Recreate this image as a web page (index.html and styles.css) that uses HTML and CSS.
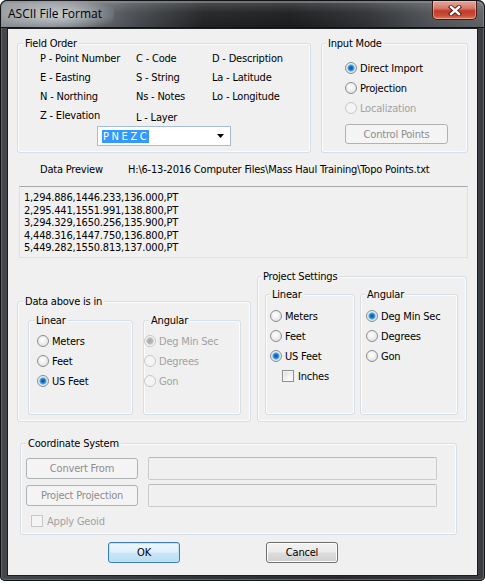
FILE: index.html
```html
<!DOCTYPE html>
<html>
<head>
<meta charset="utf-8">
<title>ASCII File Format</title>
<link rel="stylesheet" href="styles.css">
</head>
<body>
<div class="window">
  <div class="titlebar">
    <span class="title">ASCII File Format</span>
    <div class="close">
      <svg width="14" height="11" viewBox="0 0 14 11"><path d="M3 2 L11 9 M11 2 L3 9" stroke="#4a1610" stroke-width="4.2" stroke-linecap="square"/><path d="M3 2 L11 9 M11 2 L3 9" stroke="#fff" stroke-width="2.4" stroke-linecap="square"/></svg>
    </div>
  </div>
  <div class="client">
    <div class="row-top">
      <div class="group g-field">
        <div class="legend">Field Order</div>
        <div class="codes">
          <span>P - Point Number</span><span>C - Code</span><span>D - Description</span>
          <span>E - Easting</span><span>S - String</span><span>La - Latitude</span>
          <span>N - Northing</span><span>Ns - Notes</span><span>Lo - Longitude</span>
          <span>Z - Elevation</span><span class="low">L - Layer</span><span></span>
        </div>
        <div class="combo">
          <span class="sel">PNEZC</span>
          <svg class="arrow" width="7" height="4" viewBox="0 0 7 4"><path d="M0 0 H7 L3.5 4 Z" fill="#000"/></svg>
        </div>
      </div>
      <div class="group g-input">
        <div class="legend">Input Mode</div>
        <div class="opts im-opts">
          <div class="opt"><span class="radio on"></span><span>Direct Import</span></div>
          <div class="opt"><span class="radio"></span><span>Projection</span></div>
          <div class="opt dis"><span class="radio"></span><span>Localization</span></div>
        </div>
        <button class="btn disabled cp-btn">Control Points</button>
      </div>
    </div>

    <div class="preview-head">
      <span class="ph-label">Data Preview</span>
      <span class="ph-path">H:\6-13-2016 Computer Files\Mass Haul Training\Topo Points.txt</span>
    </div>
    <div class="preview">
      <div>1,294.886,1446.233,136.000,PT</div>
      <div>2,295.441,1551.991,138.800,PT</div>
      <div>3,294.329,1650.256,135.900,PT</div>
      <div>4,448.316,1447.750,136.800,PT</div>
      <div>5,449.282,1550.813,137.000,PT</div>
    </div>

    <div class="row-units">
      <div class="group g-above">
        <div class="legend">Data above is in</div>
        <div class="subs">
          <div class="group sub a-lin">
            <div class="legend">Linear</div>
            <div class="opts">
              <div class="opt"><span class="radio"></span><span>Meters</span></div>
              <div class="opt"><span class="radio"></span><span>Feet</span></div>
              <div class="opt"><span class="radio on"></span><span>US Feet</span></div>
            </div>
          </div>
          <div class="group sub a-ang">
            <div class="legend">Angular</div>
            <div class="opts">
              <div class="opt dis"><span class="radio on"></span><span>Deg Min Sec</span></div>
              <div class="opt dis"><span class="radio"></span><span>Degrees</span></div>
              <div class="opt dis"><span class="radio"></span><span>Gon</span></div>
            </div>
          </div>
        </div>
      </div>
      <div class="group g-proj">
        <div class="legend">Project Settings</div>
        <div class="subs">
          <div class="group sub p-lin">
            <div class="legend">Linear</div>
            <div class="opts">
              <div class="opt"><span class="radio"></span><span>Meters</span></div>
              <div class="opt"><span class="radio"></span><span>Feet</span></div>
              <div class="opt"><span class="radio on"></span><span>US Feet</span></div>
              <div class="opt chk-opt"><span class="check"></span><span>Inches</span></div>
            </div>
          </div>
          <div class="group sub p-ang">
            <div class="legend">Angular</div>
            <div class="opts">
              <div class="opt"><span class="radio on"></span><span>Deg Min Sec</span></div>
              <div class="opt"><span class="radio"></span><span>Degrees</span></div>
              <div class="opt"><span class="radio"></span><span>Gon</span></div>
            </div>
          </div>
        </div>
      </div>
    </div>

    <div class="group g-coord">
      <div class="legend">Coordinate System</div>
      <div class="cs-row">
        <button class="btn disabled cs-btn">Convert From</button>
        <div class="field"></div>
      </div>
      <div class="cs-row">
        <button class="btn disabled cs-btn">Project Projection</button>
        <div class="field"></div>
      </div>
      <div class="opt dis geoid"><span class="check"></span><span>Apply Geoid</span></div>
    </div>

    <div class="actions">
      <button class="btn default">OK</button>
      <button class="btn">Cancel</button>
    </div>
  </div>
</div>
</body>
</html>
```

FILE: styles.css
```css
* { box-sizing: border-box; }
html, body { margin: 0; padding: 0; background: #fff; }
body {
  width: 485px; height: 584px; overflow: hidden;
  font-family: "DejaVu Sans Condensed", "Liberation Sans", sans-serif;
  font-size: 11px; color: #000;
  letter-spacing: -0.2px;
}
.window {
  width: 485px; height: 581px;
  border-radius: 7px 7px 5px 5px;
  background: linear-gradient(90deg, #45494d 0%, #34373a 40%, #2a2c2f 70%, #3a3d41 100%);
  box-shadow: inset 0 0 0 1px #121314, inset 0 0 0 2px #62666a;
  overflow: hidden;
}
.titlebar {
  height: 28px;
  display: flex; justify-content: space-between; align-items: flex-start;
  padding: 0 8px 0 2px;
  border-radius: 7px 7px 0 0;
  background:
    linear-gradient(180deg, rgba(255,255,255,0.22) 0%, rgba(255,255,255,0.05) 45%, rgba(0,0,0,0) 100%),
    linear-gradient(90deg, #8a8f94 0%, #7a7f84 14%, #45484c 28%, #1f2123 42%, #191a1c 60%, #2b2d30 75%, #4f5357 90%, #5c6065 100%);
  box-shadow: inset 0 0 0 1px #121314, inset 0 1px 0 2px rgba(140,145,150,0.6);
}
.title {
  font-family: "Open Sans", "Noto Sans", sans-serif;
  font-size: 12px; line-height: 28px;
  letter-spacing: 0;
  padding: 0 12px 0 6px;
  color: #000;
  background: radial-gradient(ellipse 60% 55% at 48% 52%, rgba(225,230,235,0.75), rgba(225,230,235,0) 100%);
}
.close {
  width: 45px; height: 19px; margin-top: 1px;
  display: flex; align-items: center; justify-content: center;
  border: 1px solid #4a1d18;
  border-top: none;
  border-radius: 0 0 5px 5px;
  background: linear-gradient(180deg, #e8a79d 0%, #d57a6c 40%, #c23b2a 55%, #c94c36 80%, #dc7d62 100%);
  box-shadow: inset 0 0 0 1px rgba(255,210,200,0.45);
}
.client {
  margin: 0 7px;
  height: 548px;
  border: 1px solid #1c1d1f;
  background: #f0f0f0;
}

/* group boxes */
.group {
  border: 1px solid #d5dfe5;
  border-radius: 3px;
  box-shadow: inset 0 0 0 1px #fbfcfd;
}
.legend {
  display: table;
  margin: -7px 0 0 5px;
  padding: 0 2px;
  height: 13px; line-height: 13px;
  background: #f0f0f0;
}

.row-top { display: flex; gap: 10px; margin: 14px 0 0 9px; }
.g-field { width: 294px; height: 110px; }
.codes {
  display: grid;
  grid-template-columns: 96px 76px auto;
  grid-auto-rows: 19px;
  line-height: 19px;
  margin: -1px 0 0 22px;
  white-space: nowrap;
}
.codes .low { padding-top: 2px; }
.combo {
  width: 134px; height: 20px;
  margin: 1px 0 0 79px;
  border: 1px solid #a8bcd3;
  background: #fff;
  display: flex; align-items: center; justify-content: space-between;
  padding: 0 6px 0 4px;
}
.sel {
  background: #3399ff; color: #fff;
  letter-spacing: 2.6px;
  line-height: 13px;
  padding-left: 1px;
}
.g-input { width: 147px; height: 110px; }
.g-input .legend { margin-left: 4px; }
.opts { display: flex; flex-direction: column; }
.opt { display: flex; align-items: center; gap: 3px; height: 20px; white-space: nowrap; }
.opt.dis { color: #a2a2a2; }
.im-opts { margin: 8px 0 0 23px; }
.radio {
  flex: none;
  width: 12px; height: 12px; border-radius: 50%;
  border: 1px solid #8c8e90;
  background: radial-gradient(circle at 45% 40%, #ffffff 0%, #f1f1f1 40%, #d6d6d6 100%);
}
.radio.on {
  background:
    radial-gradient(circle at 50% 50%, #0f4f9c 0, #1e6fc0 1.6px, #4ba6e8 3px, #a6dcf8 3.7px, rgba(255,255,255,0) 4.2px),
    radial-gradient(circle at 45% 40%, #ffffff 0%, #f1f1f1 40%, #d6d6d6 100%);
}
.dis .radio { border-color: #c5c7c9; background: #f4f4f4; }
.dis .radio.on {
  background:
    radial-gradient(circle at 50% 50%, #a8a8a8 0, #b8b8b8 2.6px, #d8d8d8 3.6px, rgba(255,255,255,0) 4.2px),
    #f4f4f4;
}
.check {
  flex: none;
  width: 12px; height: 12px;
  border: 1px solid #8c8e90;
  background: linear-gradient(135deg, #dcdcdc 0%, #f4f4f4 60%, #ffffff 100%);
  box-shadow: inset 0 0 0 1px #f6f6f6;
}
.dis .check { border-color: #c5c7c9; background: #f4f4f4; box-shadow: none; }

.btn {
  font-family: inherit; font-size: 11px; color: #000; letter-spacing: -0.2px;
  height: 21px; padding: 0;
  border: 1px solid #707070; border-radius: 3px;
  background: linear-gradient(180deg, #f2f2f2 0%, #ebebeb 48%, #dddddd 52%, #cfcfcf 100%);
  box-shadow: inset 0 0 0 1px #fcfcfc;
}
.btn.disabled {
  color: #8d8d8d;
  border-color: #adb2b5;
  background: #f4f4f4;
  box-shadow: none;
}
.btn.default {
  border-color: #3c7fb1;
  background: linear-gradient(180deg, #eef7fd 0%, #e0f0fb 48%, #cbe6f8 52%, #b9ddf4 100%);
  box-shadow: inset 0 0 0 1px #bfe3fb;
}
.cp-btn { width: 103px; height: 20px; margin: 6px 0 0 23px; }

.preview-head { display: flex; margin: 10px 0 0 32px; line-height: 14px; white-space: nowrap; }
.ph-label { width: 88px; }
.preview {
  width: 449px; height: 72px;
  margin: 9px 0 0 11px;
  padding: 5px 0 0 4px;
  border: 1px solid #dfe3e8; border-top-color: #a5a9ae;
  background: #f0f0f0;
  line-height: 12.6px;
}

.row-units { display: flex; align-items: flex-end; gap: 6px; margin: 18px 0 0 9px; }
.g-above { width: 234px; height: 121px; }
.g-proj { width: 210px; height: 146px; }
.g-proj > .legend { margin-left: 3px; }
.subs { display: flex; }
.g-above .subs { margin: 12px 0 0 10px; gap: 10px; }
.g-proj .subs { margin: 11px 0 0 7px; gap: 5px; }
.a-lin { width: 105px; height: 95px; }
.a-ang { width: 98px; height: 95px; }
.p-lin { width: 90px; height: 121px; }
.p-ang { width: 98px; height: 121px; }
.a-lin .opts { margin: 4px 0 0 8px; }
.a-ang .opts { margin: 4px 0 0 0; }
.p-lin .legend, .p-ang .legend { margin-left: 4px; }
.p-lin .opts { margin: 5px 0 0 4px; }
.p-ang .opts { margin: 5px 0 0 5px; }
.chk-opt { margin-left: 12px; gap: 4px; }

.g-coord { width: 437px; height: 92px; margin: 21px 0 0 12px; }
.cs-row { display: flex; align-items: center; gap: 10px; height: 23px; margin: 0 0 4px 5px; }
.g-coord .legend + .cs-row { margin-top: 7px; }
.cs-btn { width: 112px; }
.field {
  width: 289px; height: 23px;
  border: 1px solid #c9cbcd; border-top-color: #b7babd;
  border-radius: 2px;
  background: #f0f0f0;
}
.geoid { margin: 3px 0 0 10px; gap: 4px; }

.actions { display: flex; gap: 86px; margin: 7px 0 0 100px; }
.actions .btn { width: 72px; }
```
